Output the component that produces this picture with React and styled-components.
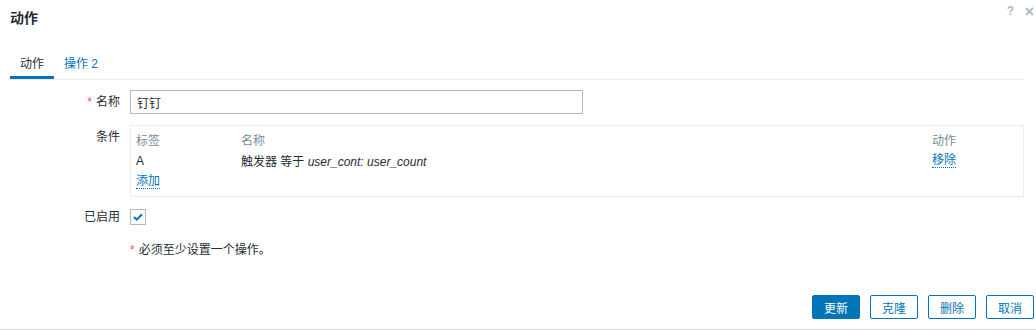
import React from "react";
import styled, { createGlobalStyle } from "styled-components";

const Global = createGlobalStyle`
  html, body { margin: 0; padding: 0; background: #fff; }
  body {
    font-family: "Liberation Sans", Arial, "Noto Sans CJK SC", sans-serif;
    font-size: 12px;
    color: #1f2c33;
  }
  * { box-sizing: border-box; }
`;

const Dialog = styled.div`
  width: 1036px;
  height: 330px;
  display: flex;
  flex-direction: column;
  border-bottom: 1px solid #cfd6d4;
  background: #fff;
`;

const Header = styled.div`
  display: flex;
  justify-content: space-between;
  align-items: flex-start;
  padding: 9px 2px 0 10px;
`;

const Title = styled.h4`
  margin: 0;
  font-size: 14px;
  font-weight: bold;
  line-height: 18px;
  color: #1f2c33;
`;

const HeaderTools = styled.div`
  display: flex;
  align-items: center;
  gap: 11px;
  margin-top: -4px;
  height: 12px;
`;

const Help = styled.span`
  font-size: 12px;
  font-weight: bold;
  line-height: 12px;
  color: #acbbc2;
`;

const Content = styled.div`
  padding: 0 12px 0 10px;
  display: flex;
  flex-direction: column;
`;

const TabList = styled.div`
  display: flex;
  margin-top: 29px;
  border-bottom: 1px solid #ebeef0;
`;

const Tab = styled.div`
  padding: 0 10px 4px;
  line-height: 16px;
  border-bottom: 3px solid ${(p) => (p.$active ? "#0275b8" : "transparent")};
  color: ${(p) => (p.$active ? "#1f2c33" : "#0275b8")};
`;

const Form = styled.div`
  display: grid;
  grid-template-columns: 110px 1fr;
  column-gap: 10px;
  margin-top: 10px;
`;

const Label = styled.div`
  text-align: right;
  line-height: ${(p) => p.$lh || 16}px;
  padding-top: ${(p) => p.$pt || 0}px;
  margin-top: ${(p) => p.$mt || 0}px;
`;

const Field = styled.div`
  margin-top: ${(p) => p.$mt || 0}px;
`;

const Star = styled.span`
  color: #e45959;
  margin-right: 4px;
`;

const Input = styled.input`
  display: block;
  width: 453px;
  height: 24px;
  border: 1px solid #acbbc2;
  padding: 0 6px;
  font: inherit;
  color: #1f2c33;
  background: #fff;
  outline: none;
`;

const CondBox = styled.div`
  border: 1px solid #ebeef0;
  padding: 3px 5px;
  height: 72px;
`;

const CondGrid = styled.div`
  display: grid;
  grid-template-columns: 105px 1fr 86px;
  grid-auto-rows: 21px;
  align-items: center;
`;

const Th = styled.div`
  color: #768d99;
`;

const Link = styled.span`
  color: #0275b8;
  border-bottom: 1px dotted #0275b8;
  justify-self: start;
  line-height: 14px;
  cursor: pointer;
`;

const Checkbox = styled.span`
  display: flex;
  align-items: center;
  justify-content: center;
  width: 16px;
  height: 16px;
  border: 1px solid #acbbc2;
  background: #fff;
`;

const Note = styled.div`
  line-height: 16px;
  margin-top: ${(p) => p.$mt || 0}px;
`;

const Footer = styled.div`
  margin-top: auto;
  display: flex;
  justify-content: flex-end;
  gap: 10px;
  padding: 0 2px 10px 0;
`;

const Button = styled.button`
  min-width: 48px;
  height: 24px;
  padding: 0 8px;
  border-radius: 2px;
  font: inherit;
  cursor: pointer;
  border: 1px solid #0275b8;
  background: ${(p) => (p.$primary ? "#0275b8" : "#fff")};
  color: ${(p) => (p.$primary ? "#fff" : "#0275b8")};
`;

export default function App() {
  return (
    <>
      <Global />
      <Dialog>
        <Header>
          <Title>动作</Title>
          <HeaderTools>
            <Help>?</Help>
            <svg width="9" height="9" viewBox="0 0 9 9">
              <path d="M1 1 L8 8 M8 1 L1 8" stroke="#acbbc2" strokeWidth="1.8" fill="none" />
            </svg>
          </HeaderTools>
        </Header>
        <Content>
          <TabList>
            <Tab $active>动作</Tab>
            <Tab>操作 2</Tab>
          </TabList>
          <Form>
            <Label $lh={24}>
              <Star>*</Star>名称
            </Label>
            <Field>
              <Input defaultValue="钉钉" />
            </Field>

            <Label $pt={4} $mt={11}>条件</Label>
            <Field $mt={11}>
              <CondBox>
                <CondGrid>
                  <Th>标签</Th>
                  <Th>名称</Th>
                  <Th>动作</Th>
                  <div>A</div>
                  <div>
                    触发器 等于 <i>user_cont: user_count</i>
                  </div>
                  <Link>移除</Link>
                  <Link>添加</Link>
                </CondGrid>
              </CondBox>
            </Field>

            <Label $mt={12}>已启用</Label>
            <Field $mt={12}>
              <Checkbox>
                <svg width="10" height="8" viewBox="0 0 10 8">
                  <path d="M1 4 L3.8 6.6 L9 1.2" stroke="#0275b8" strokeWidth="2" fill="none" />
                </svg>
              </Checkbox>
            </Field>

            <div />
            <Note $mt={17}>
              <Star>*</Star>必须至少设置一个操作。
            </Note>
          </Form>
        </Content>
        <Footer>
          <Button $primary>更新</Button>
          <Button>克隆</Button>
          <Button>删除</Button>
          <Button>取消</Button>
        </Footer>
      </Dialog>
    </>
  );
}
